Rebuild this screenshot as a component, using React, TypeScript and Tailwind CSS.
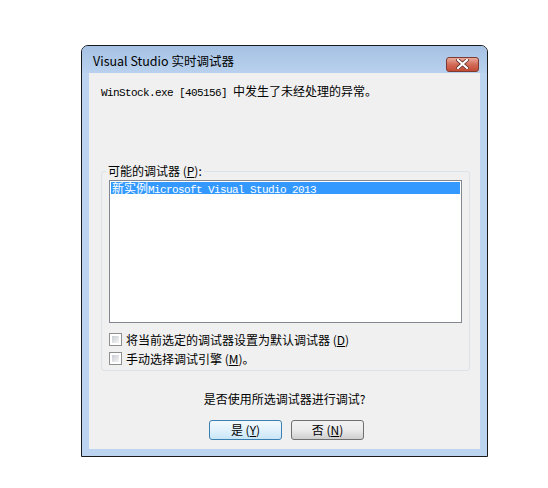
import React from 'react';

const cjk = { fontFamily: '"Noto Sans CJK SC", "Noto Sans", sans-serif' };
const mono = { fontFamily: '"Liberation Mono", "Noto Sans CJK SC", monospace' };

function Mono({ children }: { children: React.ReactNode }) {
  return (
    <span className="text-[11px] tracking-[-0.6px]" style={mono}>
      {children}
    </span>
  );
}

function Checkbox({ label, hotkey, tail }: { label: string; hotkey: string; tail?: string }) {
  return (
    <div className="flex items-center gap-[4px] h-[19px]">
      <span className="w-[13px] h-[13px] shrink-0 border border-[#8e8f8f] bg-white p-[2px]">
        <span className="block w-full h-full bg-gradient-to-br from-[#c9cdd3] to-[#f4f4f4]" />
      </span>
      <span className="text-[12px] text-black leading-none" style={cjk}>
        {label} (<span className="underline">{hotkey}</span>){tail}
      </span>
    </div>
  );
}

function Button({ label, hotkey, primary }: { label: string; hotkey: string; primary?: boolean }) {
  return (
    <button
      className={
        'w-[73px] h-[20px] rounded-[3px] border text-[12px] leading-none flex items-center justify-center ' +
        (primary
          ? 'border-[#3c7fb1] bg-gradient-to-b from-[#f2f9fd] via-[#e1f1fb] to-[#c8e6f8]'
          : 'border-[#707070] bg-gradient-to-b from-[#f2f2f2] via-[#ebebeb] to-[#cfcfcf]')
      }
      style={cjk}
    >
      {label} (<span className="underline">{hotkey}</span>)
    </button>
  );
}

export default function App() {
  return (
    <div className="w-[548px] h-[488px] bg-white pt-[45px] pl-[81px]">
      <div className="w-[407px] h-[412px] border border-[#1a1a1a] rounded-t-[7px] bg-[#bcd4ef] flex flex-col">
        <div className="h-[27px] rounded-t-[6px] bg-gradient-to-b from-[#a5c1e3] to-[#b9d1ee] flex items-center pl-[11px] pr-[8px]">
          <span className="text-[12.5px] text-black flex-1 pt-[3px]" style={cjk}>
            Visual Studio 实时调试器
          </span>
          <div className="w-[33px] h-[15px] mt-[9px] rounded-[3px] border border-[#7d3a30] bg-gradient-to-b from-[#e9a99a] via-[#d26b58] to-[#c24a34] flex items-center justify-center">
            <svg width="13" height="10" viewBox="0 0 13 10">
              <path d="M2 1 L11 9 M11 1 L2 9" stroke="#5a2a22" strokeWidth="3.6" strokeLinecap="square" />
              <path d="M2 1 L11 9 M11 1 L2 9" stroke="#ffffff" strokeWidth="2.2" strokeLinecap="square" />
            </svg>
          </div>
        </div>
        <div className="flex-1 px-[7px] pb-[7px] flex">
          <div className="flex-1 bg-[#f0f0f0] flex flex-col pl-[12px] pr-[10px] pt-[10px]">
            <div className="text-[12px] h-[16px] leading-[16px] text-black whitespace-nowrap" style={cjk}>
              <Mono>WinStock.exe [405156] </Mono>中发生了未经处理的异常。
            </div>
            <div className="mt-[72px] h-[200px] border border-[#dbe3e8] rounded-[3px] relative px-[7px] pt-[8px]">
              <span
                className="absolute left-[4px] top-[-9px] bg-[#f0f0f0] px-[2px] text-[12px] leading-[16px] text-black"
                style={cjk}
              >
                可能的调试器 (<span className="underline">P</span>):
              </span>
              <div className="h-[143px] border border-[#828790] bg-white p-[1px]">
                <div className="h-[12px] bg-[#3399ff] text-white text-[12px] leading-[12px] pl-[1px] whitespace-nowrap" style={cjk}>
                  新实例<Mono>Microsoft Visual Studio 2013</Mono>
                </div>
              </div>
              <div className="mt-[7px] flex flex-col">
                <Checkbox label="将当前选定的调试器设置为默认调试器" hotkey="D" />
                <Checkbox label="手动选择调试引擎" hotkey="M" tail="。" />
              </div>
            </div>
            <div className="mt-[20px] text-[12px] leading-[16px] text-black text-center pr-[2px]" style={cjk}>
              是否使用所选调试器进行调试?
            </div>
            <div className="mt-[13px] flex justify-center gap-[9px] pl-[2px]">
              <Button label="是" hotkey="Y" primary />
              <Button label="否" hotkey="N" />
            </div>
          </div>
        </div>
      </div>
    </div>
  );
}
